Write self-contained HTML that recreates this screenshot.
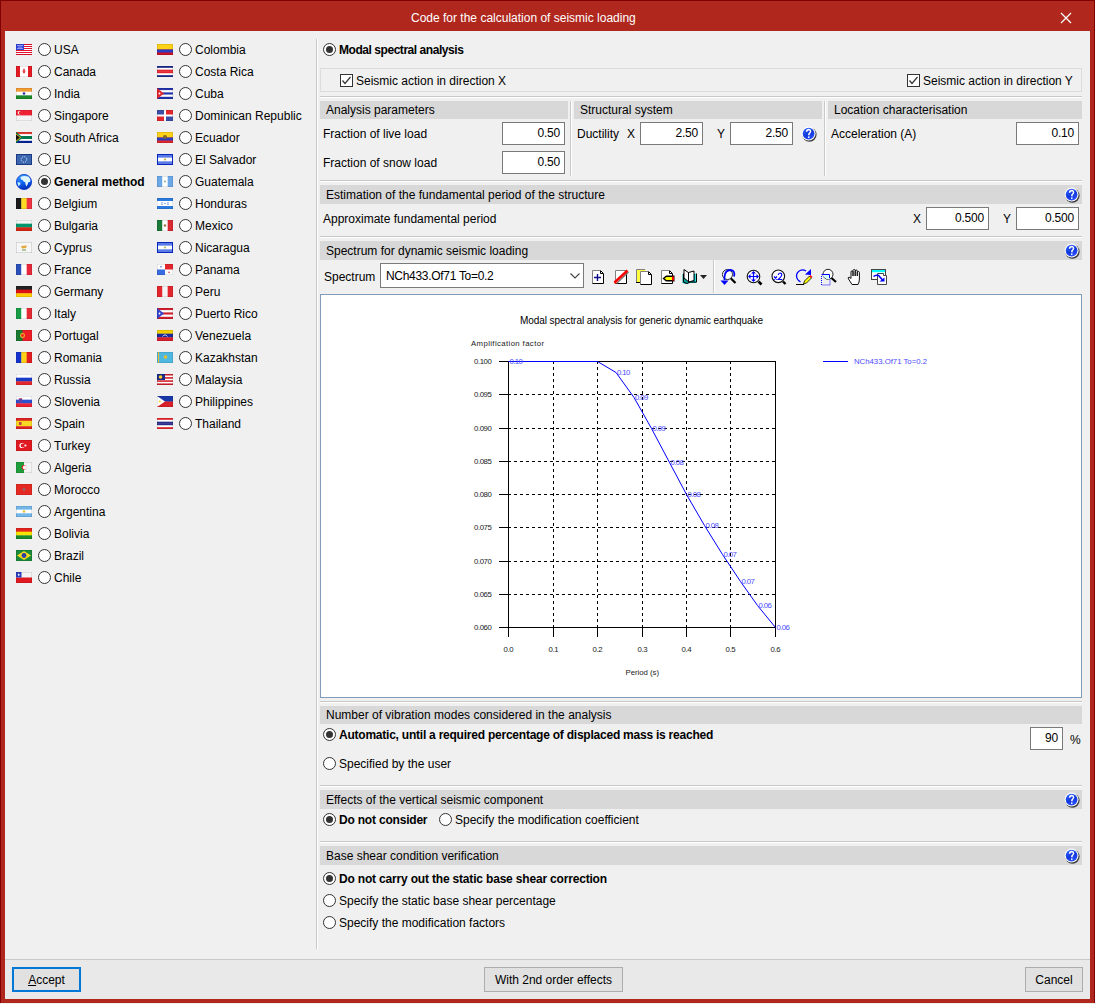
<!DOCTYPE html><html><head><meta charset="utf-8"><style>

*{margin:0;padding:0;box-sizing:border-box}
html,body{width:1095px;height:1004px;overflow:hidden;background:#f0f0f0}
body{position:relative;font-family:"Liberation Sans", sans-serif;font-size:12px;color:#000}
.t{position:absolute;white-space:nowrap;line-height:13px}
.rb{position:absolute;width:13px;height:13px;border:1px solid #333;border-radius:50%;background:#fff}
.rb i{position:absolute;left:2px;top:2px;width:7px;height:7px;border-radius:50%;background:#333}
.cb{position:absolute;width:13px;height:13px;border:1px solid #333;background:#fff}
.cb svg{position:absolute;left:0;top:0}
.in{position:absolute;border:1px solid #7a7a7a;background:#fff;box-sizing:content-box}
.in span{position:absolute;right:4px;top:4px;line-height:13px;letter-spacing:-0.2px}
.hd{position:absolute;height:18px;background:#d8d8d8}
.hp{position:absolute;width:16px;height:16px}
.hs{position:absolute;height:2px;border-top:1px solid #c8c8c8;border-bottom:1px solid #fff}
.vs{position:absolute;width:2px;border-left:1px solid #c8c8c8;border-right:1px solid #fff}
.fl{position:absolute;width:16px;height:11px}
.btn{position:absolute;border:1px solid #adadad;background:#e1e1e1;text-align:center;line-height:23px;padding-top:1px}

</style></head><body>
<svg width="0" height="0" style="position:absolute"><defs><linearGradient id="hg" x1="0" y1="0" x2="0.6" y2="1"><stop offset="0" stop-color="#5fb8ff"/><stop offset="0.18" stop-color="#2a5cff"/><stop offset="0.6" stop-color="#1238d8"/><stop offset="1" stop-color="#2a50ff"/></linearGradient></defs></svg>
<div style="position:absolute;left:0;top:0;width:1095px;height:1003px;background:#b0271e;border:1px solid #7f0000;border-bottom:none"></div>
<div style="position:absolute;left:5px;top:31px;width:1085px;height:968px;background:#f0f0f0"></div>
<div class="t" style="left:411px;top:12px;color:#fff;">Code for the calculation of seismic loading</div>
<svg style="position:absolute;left:1060px;top:12px" width="12" height="12" viewBox="0 0 12 12"><path d="M1 1 L11 11 M11 1 L1 11" stroke="#fff" stroke-width="1.3"/></svg>
<div style="position:absolute;left:5px;top:959px;width:1085px;height:40px;background:#e9e9e9;border-top:1px solid #c8c8c8"></div>
<svg class="fl" style="left:16px;top:44px" width="16" height="11" viewBox="0 0 16 11"><rect x="0" y="0.00" width="16" height="1.30" fill="#e8112d"/><rect x="0" y="1.00" width="16" height="1.30" fill="#ffffff"/><rect x="0" y="2.00" width="16" height="1.30" fill="#e8112d"/><rect x="0" y="3.00" width="16" height="1.30" fill="#ffffff"/><rect x="0" y="4.00" width="16" height="1.30" fill="#e8112d"/><rect x="0" y="5.00" width="16" height="1.30" fill="#ffffff"/><rect x="0" y="6.00" width="16" height="1.30" fill="#e8112d"/><rect x="0" y="7.00" width="16" height="1.30" fill="#ffffff"/><rect x="0" y="8.00" width="16" height="1.30" fill="#e8112d"/><rect x="0" y="9.00" width="16" height="1.30" fill="#ffffff"/><rect x="0" y="10.00" width="16" height="1.30" fill="#e8112d"/><rect x="0" y="0" width="8" height="6" fill="#3344dd"/><g fill="#fff"><circle cx="2" cy="1.5" r=".6"/><circle cx="4" cy="1.5" r=".6"/><circle cx="6" cy="1.5" r=".6"/><circle cx="3" cy="3" r=".6"/><circle cx="5" cy="3" r=".6"/><circle cx="2" cy="4.5" r=".6"/><circle cx="4" cy="4.5" r=".6"/><circle cx="6" cy="4.5" r=".6"/></g><rect x=".25" y=".25" width="15.5" height="10.5" fill="none" stroke="#000" stroke-opacity=".18" stroke-width=".5"/></svg>
<div class="rb" style="left:38px;top:43px"></div>
<div class="t" style="left:54px;top:44px;">USA</div>
<svg class="fl" style="left:16px;top:66px" width="16" height="11" viewBox="0 0 16 11"><rect width="16" height="11" fill="#fff"/><rect x="0" y="0" width="4" height="11" fill="#e31b23"/><rect x="12" y="0" width="4" height="11" fill="#e31b23"/><path d="M8 2 L9.5 5 L8.8 7.5 L8 7 L7.2 7.5 L6.5 5 Z" fill="#e84a50"/><rect x=".25" y=".25" width="15.5" height="10.5" fill="none" stroke="#000" stroke-opacity=".18" stroke-width=".5"/></svg>
<div class="rb" style="left:38px;top:65px"></div>
<div class="t" style="left:54px;top:66px;">Canada</div>
<svg class="fl" style="left:16px;top:88px" width="16" height="11" viewBox="0 0 16 11"><rect x="0" y="0.00" width="16" height="3.97" fill="#f39a32"/><rect x="0" y="3.67" width="16" height="3.97" fill="#ffffff"/><rect x="0" y="7.33" width="16" height="3.97" fill="#1c8a2a"/><circle cx="8" cy="5.5" r="1.3" fill="#2233aa"/><rect x=".25" y=".25" width="15.5" height="10.5" fill="none" stroke="#000" stroke-opacity=".18" stroke-width=".5"/></svg>
<div class="rb" style="left:38px;top:87px"></div>
<div class="t" style="left:54px;top:88px;">India</div>
<svg class="fl" style="left:16px;top:110px" width="16" height="11" viewBox="0 0 16 11"><rect x="0" y="0.00" width="16" height="5.80" fill="#ee2233"/><rect x="0" y="5.50" width="16" height="5.80" fill="#f4f4f4"/><circle cx="3.5" cy="2.8" r="1.8" fill="#fff"/><circle cx="4.3" cy="2.8" r="1.5" fill="#ee2233"/><rect x=".25" y=".25" width="15.5" height="10.5" fill="none" stroke="#000" stroke-opacity=".18" stroke-width=".5"/></svg>
<div class="rb" style="left:38px;top:109px"></div>
<div class="t" style="left:54px;top:110px;">Singapore</div>
<svg class="fl" style="left:16px;top:132px" width="16" height="11" viewBox="0 0 16 11"><rect x="0" y="0.00" width="16" height="2.50" fill="#e03c31"/><rect x="0" y="2.20" width="16" height="2.50" fill="#ffffff"/><rect x="0" y="4.40" width="16" height="2.50" fill="#007a4d"/><rect x="0" y="6.60" width="16" height="2.50" fill="#ffffff"/><rect x="0" y="8.80" width="16" height="2.50" fill="#002395"/><rect x="0" y="4" width="16" height="3" fill="#007a4d"/><path d="M0 0 L7 5.5 L0 11 Z" fill="#007a4d"/><path d="M0 1.5 L5 5.5 L0 9.5 Z" fill="#ffb612"/><path d="M0 2.5 L4 5.5 L0 8.5 Z" fill="#111"/><rect x=".25" y=".25" width="15.5" height="10.5" fill="none" stroke="#000" stroke-opacity=".18" stroke-width=".5"/></svg>
<div class="rb" style="left:38px;top:131px"></div>
<div class="t" style="left:54px;top:132px;">South Africa</div>
<svg class="fl" style="left:16px;top:154px" width="16" height="11" viewBox="0 0 16 11"><rect width="16" height="11" fill="#1f3f8f"/><rect x="1" y="1" width="14" height="9" fill="#3a65b0"/><circle cx="8" cy="5.5" r="2.8" fill="none" stroke="#fff" stroke-width=".9" stroke-dasharray="1 1.2"/><rect x=".25" y=".25" width="15.5" height="10.5" fill="none" stroke="#000" stroke-opacity=".18" stroke-width=".5"/></svg>
<div class="rb" style="left:38px;top:153px"></div>
<div class="t" style="left:54px;top:154px;">EU</div>
<svg style="position:absolute;left:16px;top:174px" width="16" height="16" viewBox="0 0 16 16"><defs><linearGradient id="gl" x1="0.3" y1="0" x2="0.6" y2="1"><stop offset="0" stop-color="#3aa0ff"/><stop offset=".55" stop-color="#1060f0"/><stop offset="1" stop-color="#0028b0"/></linearGradient></defs><circle cx="8" cy="8" r="7.6" fill="url(#gl)" stroke="#0030c8" stroke-width=".8"/><path d="M4.5 3 Q8 1.2 12.5 2.8 L14.2 5 L14.3 7.8 L12.3 8.3 L11.6 10.2 L10.6 12.6 L9.6 10.6 L9.2 8.2 L7.6 7.6 L6.8 6 L5 5.6 Z" fill="#dff6ff"/><path d="M1.3 8.3 L4 8.6 L4.6 10 L2.6 12.2 Z" fill="#c8f0ff"/></svg>
<div class="rb" style="left:38px;top:175px"><i></i></div>
<div class="t" style="left:54px;top:176px;font-weight:bold;letter-spacing:-0.05px;">General method</div>
<svg class="fl" style="left:16px;top:198px" width="16" height="11" viewBox="0 0 16 11"><rect x="0.00" y="0" width="5.63" height="11" fill="#1a1a1a"/><rect x="5.33" y="0" width="5.63" height="11" fill="#fdda24"/><rect x="10.67" y="0" width="5.63" height="11" fill="#ef3340"/><rect x=".25" y=".25" width="15.5" height="10.5" fill="none" stroke="#000" stroke-opacity=".18" stroke-width=".5"/></svg>
<div class="rb" style="left:38px;top:197px"></div>
<div class="t" style="left:54px;top:198px;">Belgium</div>
<svg class="fl" style="left:16px;top:220px" width="16" height="11" viewBox="0 0 16 11"><rect x="0" y="0.00" width="16" height="3.97" fill="#f4f4f4"/><rect x="0" y="3.67" width="16" height="3.97" fill="#00966e"/><rect x="0" y="7.33" width="16" height="3.97" fill="#d62612"/><rect x=".25" y=".25" width="15.5" height="10.5" fill="none" stroke="#000" stroke-opacity=".18" stroke-width=".5"/></svg>
<div class="rb" style="left:38px;top:219px"></div>
<div class="t" style="left:54px;top:220px;">Bulgaria</div>
<svg class="fl" style="left:16px;top:242px" width="16" height="11" viewBox="0 0 16 11"><rect width="16" height="11" fill="#f6f6f6" stroke="#ddd" stroke-width=".5"/><path d="M5 4 L11 3.5 L10 6 L6 6.5 Z" fill="#e3a93a"/><path d="M6 8 L10 8" stroke="#6a9a4a" stroke-width="1"/><rect x=".25" y=".25" width="15.5" height="10.5" fill="none" stroke="#000" stroke-opacity=".18" stroke-width=".5"/></svg>
<div class="rb" style="left:38px;top:241px"></div>
<div class="t" style="left:54px;top:242px;">Cyprus</div>
<svg class="fl" style="left:16px;top:264px" width="16" height="11" viewBox="0 0 16 11"><rect x="0.00" y="0" width="5.63" height="11" fill="#2a4fb8"/><rect x="5.33" y="0" width="5.63" height="11" fill="#ffffff"/><rect x="10.67" y="0" width="5.63" height="11" fill="#e8283a"/><rect x=".25" y=".25" width="15.5" height="10.5" fill="none" stroke="#000" stroke-opacity=".18" stroke-width=".5"/></svg>
<div class="rb" style="left:38px;top:263px"></div>
<div class="t" style="left:54px;top:264px;">France</div>
<svg class="fl" style="left:16px;top:286px" width="16" height="11" viewBox="0 0 16 11"><rect x="0" y="0.00" width="16" height="3.97" fill="#222"/><rect x="0" y="3.67" width="16" height="3.97" fill="#dd1111"/><rect x="0" y="7.33" width="16" height="3.97" fill="#ffce00"/><rect x=".25" y=".25" width="15.5" height="10.5" fill="none" stroke="#000" stroke-opacity=".18" stroke-width=".5"/></svg>
<div class="rb" style="left:38px;top:285px"></div>
<div class="t" style="left:54px;top:286px;">Germany</div>
<svg class="fl" style="left:16px;top:308px" width="16" height="11" viewBox="0 0 16 11"><rect x="0.00" y="0" width="5.63" height="11" fill="#179c45"/><rect x="5.33" y="0" width="5.63" height="11" fill="#ffffff"/><rect x="10.67" y="0" width="5.63" height="11" fill="#e42a35"/><rect x=".25" y=".25" width="15.5" height="10.5" fill="none" stroke="#000" stroke-opacity=".18" stroke-width=".5"/></svg>
<div class="rb" style="left:38px;top:307px"></div>
<div class="t" style="left:54px;top:308px;">Italy</div>
<svg class="fl" style="left:16px;top:330px" width="16" height="11" viewBox="0 0 16 11"><rect width="16" height="11" fill="#ee1c25"/><rect width="6.5" height="11" fill="#1a7a30"/><circle cx="6.5" cy="5.5" r="2.4" fill="#f0c020"/><circle cx="6.5" cy="5.5" r="1.4" fill="#ee1c25"/><rect x=".25" y=".25" width="15.5" height="10.5" fill="none" stroke="#000" stroke-opacity=".18" stroke-width=".5"/></svg>
<div class="rb" style="left:38px;top:329px"></div>
<div class="t" style="left:54px;top:330px;">Portugal</div>
<svg class="fl" style="left:16px;top:352px" width="16" height="11" viewBox="0 0 16 11"><rect x="0.00" y="0" width="5.63" height="11" fill="#1533cc"/><rect x="5.33" y="0" width="5.63" height="11" fill="#fcd116"/><rect x="10.67" y="0" width="5.63" height="11" fill="#e41e20"/><rect x=".25" y=".25" width="15.5" height="10.5" fill="none" stroke="#000" stroke-opacity=".18" stroke-width=".5"/></svg>
<div class="rb" style="left:38px;top:351px"></div>
<div class="t" style="left:54px;top:352px;">Romania</div>
<svg class="fl" style="left:16px;top:374px" width="16" height="11" viewBox="0 0 16 11"><rect x="0" y="0.00" width="16" height="3.97" fill="#ffffff"/><rect x="0" y="3.67" width="16" height="3.97" fill="#1a3cc8"/><rect x="0" y="7.33" width="16" height="3.97" fill="#e3262e"/><rect x=".25" y=".25" width="15.5" height="10.5" fill="none" stroke="#000" stroke-opacity=".18" stroke-width=".5"/></svg>
<div class="rb" style="left:38px;top:373px"></div>
<div class="t" style="left:54px;top:374px;">Russia</div>
<svg class="fl" style="left:16px;top:396px" width="16" height="11" viewBox="0 0 16 11"><rect x="0" y="0.00" width="16" height="3.97" fill="#ffffff"/><rect x="0" y="3.67" width="16" height="3.97" fill="#2a4fd0"/><rect x="0" y="7.33" width="16" height="3.97" fill="#ee2233"/><path d="M3 2.5 L6 2.5 L5.8 5 L4.5 6 L3.2 5 Z" fill="#2a4fd0" stroke="#ee2233" stroke-width=".5"/><rect x=".25" y=".25" width="15.5" height="10.5" fill="none" stroke="#000" stroke-opacity=".18" stroke-width=".5"/></svg>
<div class="rb" style="left:38px;top:395px"></div>
<div class="t" style="left:54px;top:396px;">Slovenia</div>
<svg class="fl" style="left:16px;top:418px" width="16" height="11" viewBox="0 0 16 11"><rect x="0" y="0.00" width="16" height="3.05" fill="#dd2222"/><rect x="0" y="2.75" width="16" height="3.05" fill="#f8d81c"/><rect x="0" y="5.50" width="16" height="3.05" fill="#f8d81c"/><rect x="0" y="8.25" width="16" height="3.05" fill="#dd2222"/><rect x="3" y="4" width="2.5" height="3" fill="#c04040"/><rect x=".25" y=".25" width="15.5" height="10.5" fill="none" stroke="#000" stroke-opacity=".18" stroke-width=".5"/></svg>
<div class="rb" style="left:38px;top:417px"></div>
<div class="t" style="left:54px;top:418px;">Spain</div>
<svg class="fl" style="left:16px;top:440px" width="16" height="11" viewBox="0 0 16 11"><rect width="16" height="11" fill="#e11a22"/><circle cx="6" cy="5.5" r="2.6" fill="#fff"/><circle cx="6.8" cy="5.5" r="2.1" fill="#e11a22"/><circle cx="9.5" cy="5.5" r="1" fill="#fff"/><rect x=".25" y=".25" width="15.5" height="10.5" fill="none" stroke="#000" stroke-opacity=".18" stroke-width=".5"/></svg>
<div class="rb" style="left:38px;top:439px"></div>
<div class="t" style="left:54px;top:440px;">Turkey</div>
<svg class="fl" style="left:16px;top:462px" width="16" height="11" viewBox="0 0 16 11"><rect x="0.00" y="0" width="8.30" height="11" fill="#1f9d3b"/><rect x="8.00" y="0" width="8.30" height="11" fill="#f4f4f4"/><circle cx="8" cy="5.5" r="2.4" fill="#e31b23"/><circle cx="8.7" cy="5.5" r="1.9" fill="#f4f4f4"/><rect x=".25" y=".25" width="15.5" height="10.5" fill="none" stroke="#000" stroke-opacity=".18" stroke-width=".5"/></svg>
<div class="rb" style="left:38px;top:461px"></div>
<div class="t" style="left:54px;top:462px;">Algeria</div>
<svg class="fl" style="left:16px;top:484px" width="16" height="11" viewBox="0 0 16 11"><rect width="16" height="11" fill="#e52822"/><circle cx="8" cy="5.5" r="1.2" fill="#777"/><rect x=".25" y=".25" width="15.5" height="10.5" fill="none" stroke="#000" stroke-opacity=".18" stroke-width=".5"/></svg>
<div class="rb" style="left:38px;top:483px"></div>
<div class="t" style="left:54px;top:484px;">Morocco</div>
<svg class="fl" style="left:16px;top:506px" width="16" height="11" viewBox="0 0 16 11"><rect x="0" y="0.00" width="16" height="3.97" fill="#73b6ea"/><rect x="0" y="3.67" width="16" height="3.97" fill="#ffffff"/><rect x="0" y="7.33" width="16" height="3.97" fill="#73b6ea"/><circle cx="8" cy="5.5" r="1.2" fill="#f0c020"/><rect x=".25" y=".25" width="15.5" height="10.5" fill="none" stroke="#000" stroke-opacity=".18" stroke-width=".5"/></svg>
<div class="rb" style="left:38px;top:505px"></div>
<div class="t" style="left:54px;top:506px;">Argentina</div>
<svg class="fl" style="left:16px;top:528px" width="16" height="11" viewBox="0 0 16 11"><rect x="0" y="0.00" width="16" height="3.97" fill="#e3231c"/><rect x="0" y="3.67" width="16" height="3.97" fill="#f9e300"/><rect x="0" y="7.33" width="16" height="3.97" fill="#1a8a2a"/><rect x=".25" y=".25" width="15.5" height="10.5" fill="none" stroke="#000" stroke-opacity=".18" stroke-width=".5"/></svg>
<div class="rb" style="left:38px;top:527px"></div>
<div class="t" style="left:54px;top:528px;">Bolivia</div>
<svg class="fl" style="left:16px;top:550px" width="16" height="11" viewBox="0 0 16 11"><rect width="16" height="11" fill="#1a8a3a"/><path d="M8 1 L15 5.5 L8 10 L1 5.5 Z" fill="#f8d81c"/><circle cx="8" cy="5.5" r="2.4" fill="#2a3f9f"/><rect x=".25" y=".25" width="15.5" height="10.5" fill="none" stroke="#000" stroke-opacity=".18" stroke-width=".5"/></svg>
<div class="rb" style="left:38px;top:549px"></div>
<div class="t" style="left:54px;top:550px;">Brazil</div>
<svg class="fl" style="left:16px;top:572px" width="16" height="11" viewBox="0 0 16 11"><rect x="0" y="0.00" width="16" height="5.80" fill="#f4f4f4"/><rect x="0" y="5.50" width="16" height="5.80" fill="#e11a22"/><rect width="5.5" height="5.5" fill="#2a3fbf"/><circle cx="2.75" cy="2.75" r=".9" fill="#fff"/><rect x=".25" y=".25" width="15.5" height="10.5" fill="none" stroke="#000" stroke-opacity=".18" stroke-width=".5"/></svg>
<div class="rb" style="left:38px;top:571px"></div>
<div class="t" style="left:54px;top:572px;">Chile</div>
<svg class="fl" style="left:157px;top:44px" width="16" height="11" viewBox="0 0 16 11"><rect width="16" height="11" fill="#ce1126"/><rect width="16" height="5.5" fill="#fcd116"/><rect y="5.5" width="16" height="3" fill="#2a3fbf"/><rect x=".25" y=".25" width="15.5" height="10.5" fill="none" stroke="#000" stroke-opacity=".18" stroke-width=".5"/></svg>
<div class="rb" style="left:179px;top:43px"></div>
<div class="t" style="left:195px;top:44px;">Colombia</div>
<svg class="fl" style="left:157px;top:66px" width="16" height="11" viewBox="0 0 16 11"><rect x="0" y="0.00" width="16" height="2.13" fill="#1a2a8a"/><rect x="0" y="1.83" width="16" height="2.13" fill="#ffffff"/><rect x="0" y="3.67" width="16" height="2.13" fill="#e3262e"/><rect x="0" y="5.50" width="16" height="2.13" fill="#e3262e"/><rect x="0" y="7.33" width="16" height="2.13" fill="#ffffff"/><rect x="0" y="9.17" width="16" height="2.13" fill="#1a2a8a"/><rect x=".25" y=".25" width="15.5" height="10.5" fill="none" stroke="#000" stroke-opacity=".18" stroke-width=".5"/></svg>
<div class="rb" style="left:179px;top:65px"></div>
<div class="t" style="left:195px;top:66px;">Costa Rica</div>
<svg class="fl" style="left:157px;top:88px" width="16" height="11" viewBox="0 0 16 11"><rect x="0" y="0.00" width="16" height="2.50" fill="#2233aa"/><rect x="0" y="2.20" width="16" height="2.50" fill="#ffffff"/><rect x="0" y="4.40" width="16" height="2.50" fill="#2233aa"/><rect x="0" y="6.60" width="16" height="2.50" fill="#ffffff"/><rect x="0" y="8.80" width="16" height="2.50" fill="#2233aa"/><path d="M0 0 L7 5.5 L0 11 Z" fill="#e3262e"/><circle cx="2.5" cy="5.5" r=".9" fill="#fff"/><rect x=".25" y=".25" width="15.5" height="10.5" fill="none" stroke="#000" stroke-opacity=".18" stroke-width=".5"/></svg>
<div class="rb" style="left:179px;top:87px"></div>
<div class="t" style="left:195px;top:88px;">Cuba</div>
<svg class="fl" style="left:157px;top:110px" width="16" height="11" viewBox="0 0 16 11"><rect width="16" height="11" fill="#fff"/><rect x="0" y="0" width="7" height="4.5" fill="#3a4fa8"/><rect x="9" y="0" width="7" height="4.5" fill="#e3262e"/><rect x="0" y="6.5" width="7" height="4.5" fill="#e3262e"/><rect x="9" y="6.5" width="7" height="4.5" fill="#3a4fa8"/><rect x=".25" y=".25" width="15.5" height="10.5" fill="none" stroke="#000" stroke-opacity=".18" stroke-width=".5"/></svg>
<div class="rb" style="left:179px;top:109px"></div>
<div class="t" style="left:195px;top:110px;">Dominican Republic</div>
<svg class="fl" style="left:157px;top:132px" width="16" height="11" viewBox="0 0 16 11"><rect width="16" height="11" fill="#e3262e"/><rect width="16" height="5.5" fill="#fcd116"/><rect y="5.5" width="16" height="3" fill="#2a3fbf"/><circle cx="8" cy="5" r="2" fill="#7a6a30"/><rect x=".25" y=".25" width="15.5" height="10.5" fill="none" stroke="#000" stroke-opacity=".18" stroke-width=".5"/></svg>
<div class="rb" style="left:179px;top:131px"></div>
<div class="t" style="left:195px;top:132px;">Ecuador</div>
<svg class="fl" style="left:157px;top:154px" width="16" height="11" viewBox="0 0 16 11"><rect x="0" y="0.00" width="16" height="3.97" fill="#5a7ae8"/><rect x="0" y="3.67" width="16" height="3.97" fill="#ffffff"/><rect x="0" y="7.33" width="16" height="3.97" fill="#5a7ae8"/><rect x=".5" y=".5" width="15" height="10" fill="none" stroke="#0a2ad0" stroke-width="1"/><circle cx="8" cy="5.5" r="1.1" fill="#c9b040"/><rect x=".25" y=".25" width="15.5" height="10.5" fill="none" stroke="#000" stroke-opacity=".18" stroke-width=".5"/></svg>
<div class="rb" style="left:179px;top:153px"></div>
<div class="t" style="left:195px;top:154px;">El Salvador</div>
<svg class="fl" style="left:157px;top:176px" width="16" height="11" viewBox="0 0 16 11"><rect x="0.00" y="0" width="5.63" height="11" fill="#6aa8e8"/><rect x="5.33" y="0" width="5.63" height="11" fill="#ffffff"/><rect x="10.67" y="0" width="5.63" height="11" fill="#6aa8e8"/><circle cx="8" cy="5.5" r="1.1" fill="#9ab090"/><rect x=".25" y=".25" width="15.5" height="10.5" fill="none" stroke="#000" stroke-opacity=".18" stroke-width=".5"/></svg>
<div class="rb" style="left:179px;top:175px"></div>
<div class="t" style="left:195px;top:176px;">Guatemala</div>
<svg class="fl" style="left:157px;top:198px" width="16" height="11" viewBox="0 0 16 11"><rect width="16" height="11" fill="#fff"/><rect width="16" height="3" fill="#2a7ae0"/><rect y="8" width="16" height="3" fill="#2a7ae0"/><g fill="#2060c0"><rect x="4.5" y="4.3" width="1" height="1"/><rect x="10.5" y="4.3" width="1" height="1"/><rect x="7.5" y="5" width="1" height="1"/><rect x="4.5" y="5.8" width="1" height="1"/><rect x="10.5" y="5.8" width="1" height="1"/></g><rect x=".25" y=".25" width="15.5" height="10.5" fill="none" stroke="#000" stroke-opacity=".18" stroke-width=".5"/></svg>
<div class="rb" style="left:179px;top:197px"></div>
<div class="t" style="left:195px;top:198px;">Honduras</div>
<svg class="fl" style="left:157px;top:220px" width="16" height="11" viewBox="0 0 16 11"><rect x="0.00" y="0" width="5.63" height="11" fill="#1a7a3a"/><rect x="5.33" y="0" width="5.63" height="11" fill="#ffffff"/><rect x="10.67" y="0" width="5.63" height="11" fill="#d82a30"/><circle cx="8" cy="5.5" r="1.3" fill="#9a7a50"/><rect x=".25" y=".25" width="15.5" height="10.5" fill="none" stroke="#000" stroke-opacity=".18" stroke-width=".5"/></svg>
<div class="rb" style="left:179px;top:219px"></div>
<div class="t" style="left:195px;top:220px;">Mexico</div>
<svg class="fl" style="left:157px;top:242px" width="16" height="11" viewBox="0 0 16 11"><rect x="0" y="0.00" width="16" height="3.97" fill="#5a7ae8"/><rect x="0" y="3.67" width="16" height="3.97" fill="#ffffff"/><rect x="0" y="7.33" width="16" height="3.97" fill="#5a7ae8"/><rect x=".5" y=".5" width="15" height="10" fill="none" stroke="#0a2ad0" stroke-width="1"/><circle cx="8" cy="5.5" r="1.1" fill="#b0c060"/><rect x=".25" y=".25" width="15.5" height="10.5" fill="none" stroke="#000" stroke-opacity=".18" stroke-width=".5"/></svg>
<div class="rb" style="left:179px;top:241px"></div>
<div class="t" style="left:195px;top:242px;">Nicaragua</div>
<svg class="fl" style="left:157px;top:264px" width="16" height="11" viewBox="0 0 16 11"><rect width="16" height="11" fill="#fff"/><rect x="8" y="0" width="8" height="5.5" fill="#e3262e"/><rect x="0" y="5.5" width="8" height="5.5" fill="#3a6ae0"/><circle cx="4" cy="2.7" r=".8" fill="#3a6ae0"/><circle cx="12" cy="8.2" r=".8" fill="#e3262e"/><rect x=".25" y=".25" width="15.5" height="10.5" fill="none" stroke="#000" stroke-opacity=".18" stroke-width=".5"/></svg>
<div class="rb" style="left:179px;top:263px"></div>
<div class="t" style="left:195px;top:264px;">Panama</div>
<svg class="fl" style="left:157px;top:286px" width="16" height="11" viewBox="0 0 16 11"><rect x="0.00" y="0" width="5.63" height="11" fill="#e3262e"/><rect x="5.33" y="0" width="5.63" height="11" fill="#f4f4f4"/><rect x="10.67" y="0" width="5.63" height="11" fill="#e3262e"/><rect x=".25" y=".25" width="15.5" height="10.5" fill="none" stroke="#000" stroke-opacity=".18" stroke-width=".5"/></svg>
<div class="rb" style="left:179px;top:285px"></div>
<div class="t" style="left:195px;top:286px;">Peru</div>
<svg class="fl" style="left:157px;top:308px" width="16" height="11" viewBox="0 0 16 11"><rect x="0" y="0.00" width="16" height="2.50" fill="#d02030"/><rect x="0" y="2.20" width="16" height="2.50" fill="#ffffff"/><rect x="0" y="4.40" width="16" height="2.50" fill="#d02030"/><rect x="0" y="6.60" width="16" height="2.50" fill="#ffffff"/><rect x="0" y="8.80" width="16" height="2.50" fill="#d02030"/><path d="M0 0 L7 5.5 L0 11 Z" fill="#3344cc"/><circle cx="2.5" cy="5.5" r=".9" fill="#fff"/><rect x=".25" y=".25" width="15.5" height="10.5" fill="none" stroke="#000" stroke-opacity=".18" stroke-width=".5"/></svg>
<div class="rb" style="left:179px;top:307px"></div>
<div class="t" style="left:195px;top:308px;">Puerto Rico</div>
<svg class="fl" style="left:157px;top:330px" width="16" height="11" viewBox="0 0 16 11"><rect x="0" y="0.00" width="16" height="3.97" fill="#f4d000"/><rect x="0" y="3.67" width="16" height="3.97" fill="#1a2a9a"/><rect x="0" y="7.33" width="16" height="3.97" fill="#d8202a"/><path d="M5.5 6.5 Q8 3.2 10.5 6.5" stroke="#fff" stroke-width=".8" fill="none"/><rect x=".25" y=".25" width="15.5" height="10.5" fill="none" stroke="#000" stroke-opacity=".18" stroke-width=".5"/></svg>
<div class="rb" style="left:179px;top:329px"></div>
<div class="t" style="left:195px;top:330px;">Venezuela</div>
<svg class="fl" style="left:157px;top:352px" width="16" height="11" viewBox="0 0 16 11"><rect width="16" height="11" fill="#4fb8e0"/><rect x="1" y="0" width="1" height="11" fill="#e8c030"/><circle cx="8.5" cy="5" r="1.8" fill="#e8c030"/><rect x=".25" y=".25" width="15.5" height="10.5" fill="none" stroke="#000" stroke-opacity=".18" stroke-width=".5"/></svg>
<div class="rb" style="left:179px;top:351px"></div>
<div class="t" style="left:195px;top:352px;">Kazakhstan</div>
<svg class="fl" style="left:157px;top:374px" width="16" height="11" viewBox="0 0 16 11"><rect x="0" y="0.00" width="16" height="1.87" fill="#d0202a"/><rect x="0" y="1.57" width="16" height="1.87" fill="#fff"/><rect x="0" y="3.14" width="16" height="1.87" fill="#d0202a"/><rect x="0" y="4.71" width="16" height="1.87" fill="#fff"/><rect x="0" y="6.29" width="16" height="1.87" fill="#d0202a"/><rect x="0" y="7.86" width="16" height="1.87" fill="#fff"/><rect x="0" y="9.43" width="16" height="1.87" fill="#d0202a"/><rect width="8" height="6" fill="#1a2a8a"/><circle cx="3.5" cy="3" r="1.8" fill="#f8d020"/><rect x=".25" y=".25" width="15.5" height="10.5" fill="none" stroke="#000" stroke-opacity=".18" stroke-width=".5"/></svg>
<div class="rb" style="left:179px;top:373px"></div>
<div class="t" style="left:195px;top:374px;">Malaysia</div>
<svg class="fl" style="left:157px;top:396px" width="16" height="11" viewBox="0 0 16 11"><rect x="0" y="0.00" width="16" height="5.80" fill="#1a38a8"/><rect x="0" y="5.50" width="16" height="5.80" fill="#d8202a"/><path d="M0 0 L8 5.5 L0 11 Z" fill="#fff"/><circle cx="2.8" cy="5.5" r="1.1" fill="#f8d020"/><rect x=".25" y=".25" width="15.5" height="10.5" fill="none" stroke="#000" stroke-opacity=".18" stroke-width=".5"/></svg>
<div class="rb" style="left:179px;top:395px"></div>
<div class="t" style="left:195px;top:396px;">Philippines</div>
<svg class="fl" style="left:157px;top:418px" width="16" height="11" viewBox="0 0 16 11"><rect x="0" y="0.00" width="16" height="2.13" fill="#e3262e"/><rect x="0" y="1.83" width="16" height="2.13" fill="#ffffff"/><rect x="0" y="3.67" width="16" height="2.13" fill="#2a2d8a"/><rect x="0" y="5.50" width="16" height="2.13" fill="#2a2d8a"/><rect x="0" y="7.33" width="16" height="2.13" fill="#ffffff"/><rect x="0" y="9.17" width="16" height="2.13" fill="#e3262e"/><rect x=".25" y=".25" width="15.5" height="10.5" fill="none" stroke="#000" stroke-opacity=".18" stroke-width=".5"/></svg>
<div class="rb" style="left:179px;top:417px"></div>
<div class="t" style="left:195px;top:418px;">Thailand</div>
<div class="vs" style="left:316px;top:39px;height:910px"></div>
<div class="rb" style="left:323px;top:43px"><i></i></div>
<div class="t" style="left:339px;top:44px;font-weight:bold;letter-spacing:-0.45px;">Modal spectral analysis</div>
<div style="position:absolute;left:320px;top:68px;width:762px;height:24px;border:1px solid #dcdcdc"></div>
<div class="cb" style="left:340px;top:74px"><svg width="11" height="11" viewBox="0 0 11 11"><path d="M1.5 5.5 L4 8.5 L9.5 2" stroke="#333" stroke-width="1.2" fill="none"/></svg></div>
<div class="t" style="left:356px;top:75px;">Seismic action in direction X</div>
<div class="cb" style="left:907px;top:74px"><svg width="11" height="11" viewBox="0 0 11 11"><path d="M1.5 5.5 L4 8.5 L9.5 2" stroke="#333" stroke-width="1.2" fill="none"/></svg></div>
<div class="t" style="left:923px;top:75px;">Seismic action in direction Y</div>
<div class="hs" style="left:320px;top:96px;width:762px"></div>
<div class="hd" style="left:320px;top:101px;width:248px;height:18px"></div>
<div class="t" style="left:326px;top:104px;">Analysis parameters</div>
<div class="hd" style="left:574px;top:101px;width:248px;height:18px"></div>
<div class="t" style="left:580px;top:104px;">Structural system</div>
<div class="hd" style="left:828px;top:101px;width:254px;height:18px"></div>
<div class="t" style="left:834px;top:104px;">Location characterisation</div>
<div class="vs" style="left:570px;top:101px;height:75px"></div>
<div class="vs" style="left:824px;top:101px;height:75px"></div>
<div class="t" style="left:323px;top:128px;">Fraction of live load</div>
<div class="in" style="left:502px;top:122px;width:61px;height:21px"><span>0.50</span></div>
<div class="t" style="left:323px;top:157px;">Fraction of snow load</div>
<div class="in" style="left:502px;top:151px;width:61px;height:21px"><span>0.50</span></div>
<div class="t" style="left:577px;top:128px;">Ductility</div>
<div class="t" style="left:627px;top:128px;">X</div>
<div class="in" style="left:640px;top:122px;width:61px;height:21px"><span>2.50</span></div>
<div class="t" style="left:717px;top:128px;">Y</div>
<div class="in" style="left:730px;top:122px;width:61px;height:21px"><span>2.50</span></div>
<div class="hp" style="left:801px;top:126px"><svg width="17" height="17" viewBox="0 0 17 17"><circle cx="8.4" cy="8.6" r="7.2" fill="#111" opacity="0.8"/><circle cx="7.6" cy="7.6" r="7" fill="#fff"/><circle cx="7.6" cy="7.6" r="5.9" fill="url(#hg)"/><path d="M5.6 5.8 Q5.8 3.6 7.8 3.6 Q9.6 3.7 9.6 5.3 Q9.5 6.6 8.2 7.5 L7.7 9.3" stroke="#fff" stroke-width="1.5" fill="none"/><rect x="7" y="10.4" width="1.5" height="1.5" fill="#fff"/></svg></div>
<div class="t" style="left:831px;top:128px;">Acceleration (A)</div>
<div class="in" style="left:1016px;top:122px;width:61px;height:21px"><span>0.10</span></div>
<div class="hs" style="left:320px;top:180px;width:762px"></div>
<div class="hd" style="left:320px;top:185px;width:762px;height:19px"></div>
<div class="t" style="left:326px;top:189px;">Estimation of the fundamental period of the structure</div>
<div class="hp" style="left:1064px;top:187px"><svg width="17" height="17" viewBox="0 0 17 17"><circle cx="8.4" cy="8.6" r="7.2" fill="#111" opacity="0.8"/><circle cx="7.6" cy="7.6" r="7" fill="#fff"/><circle cx="7.6" cy="7.6" r="5.9" fill="url(#hg)"/><path d="M5.6 5.8 Q5.8 3.6 7.8 3.6 Q9.6 3.7 9.6 5.3 Q9.5 6.6 8.2 7.5 L7.7 9.3" stroke="#fff" stroke-width="1.5" fill="none"/><rect x="7" y="10.4" width="1.5" height="1.5" fill="#fff"/></svg></div>
<div class="t" style="left:323px;top:213px;">Approximate fundamental period</div>
<div class="t" style="left:913px;top:213px;">X</div>
<div class="in" style="left:926px;top:207px;width:61px;height:21px"><span>0.500</span></div>
<div class="t" style="left:1003px;top:213px;">Y</div>
<div class="in" style="left:1016px;top:207px;width:61px;height:21px"><span>0.500</span></div>
<div class="hs" style="left:320px;top:236px;width:762px"></div>
<div class="hd" style="left:320px;top:241px;width:762px;height:19px"></div>
<div class="t" style="left:326px;top:245px;">Spectrum for dynamic seismic loading</div>
<div class="hp" style="left:1064px;top:243px"><svg width="17" height="17" viewBox="0 0 17 17"><circle cx="8.4" cy="8.6" r="7.2" fill="#111" opacity="0.8"/><circle cx="7.6" cy="7.6" r="7" fill="#fff"/><circle cx="7.6" cy="7.6" r="5.9" fill="url(#hg)"/><path d="M5.6 5.8 Q5.8 3.6 7.8 3.6 Q9.6 3.7 9.6 5.3 Q9.5 6.6 8.2 7.5 L7.7 9.3" stroke="#fff" stroke-width="1.5" fill="none"/><rect x="7" y="10.4" width="1.5" height="1.5" fill="#fff"/></svg></div>
<div class="t" style="left:324px;top:271px;">Spectrum</div>
<div class="in" style="left:380px;top:263px;width:202px;height:23px"></div>
<div class="t" style="left:386px;top:270px;letter-spacing:-0.3px;">NCh433.Of71 To=0.2</div>
<svg style="position:absolute;left:569px;top:272px" width="12" height="8" viewBox="0 0 12 8"><path d="M1.5 1.5 L6 6 L10.5 1.5" stroke="#444" stroke-width="1.1" fill="none"/></svg>
<div class="vs" style="left:713px;top:260px;height:33px"></div>
<svg style="position:absolute;left:0;top:0" width="1095" height="1004"><path d="M592.5 283.5 V270.5 H600.5 L603.5 273.5 V283.5 Z" fill="#fff"/><path d="M592.5 283.5 V270.5 H600.5" fill="none" stroke="#808080" stroke-width="1"/><path d="M600.5 270.5 L603.5 273.5 V283.5 H592.5" fill="none" stroke="#000" stroke-width="1"/><path d="M600.5 271 V273.5 H603" fill="none" stroke="#000" stroke-width="1"/><path d="M594 277.5 H601 M597.5 274 V281" stroke="#0a0a8a" stroke-width="1.4"/><path d="M615.5 283.5 V270.5 H626.5 L626.5 270.5 V283.5 Z" fill="#fff"/><path d="M615.5 283.5 V270.5 H626.5" fill="none" stroke="#808080" stroke-width="1"/><path d="M626.5 270.5 L626.5 270.5 V283.5 H615.5" fill="none" stroke="#000" stroke-width="1"/><path d="M626.5 271 V270.5 H626" fill="none" stroke="#000" stroke-width="1"/><path d="M615.5 282.5 L627.5 271" stroke="#777" stroke-width="1.2" transform="translate(1,1)"/><path d="M614.5 282.5 L627.5 270.5" stroke="#ff0000" stroke-width="2.4"/><path d="M614.5 280.5 L614.5 283.5 L617 283.5 Z" fill="#ff0000"/><path d="M636.5 282.5 V269.5 H645.5 V282.5 Z" fill="#ffff40"/><path d="M636.5 282.5 V269.5 H645" fill="none" stroke="#808080" stroke-width="1"/><path d="M636 282.5 H640" stroke="#000" stroke-width="1"/><path d="M640.5 284.5 V271.5 H648.5 L651.5 274.5 V284.5 Z" fill="#fff"/><path d="M640.5 284.5 V271.5 H648.5" fill="none" stroke="#808080" stroke-width="1"/><path d="M648.5 271.5 L651.5 274.5 V284.5 H640.5" fill="none" stroke="#000" stroke-width="1"/><path d="M648.5 272 V274.5 H651" fill="none" stroke="#000" stroke-width="1"/><path d="M661.5 283.5 V270.5 H669.5 L672.5 273.5 V283.5 Z" fill="#fff"/><path d="M661.5 283.5 V270.5 H669.5" fill="none" stroke="#808080" stroke-width="1"/><path d="M669.5 270.5 L672.5 273.5 V283.5 H661.5" fill="none" stroke="#000" stroke-width="1"/><path d="M669.5 271 V273.5 H672" fill="none" stroke="#000" stroke-width="1"/><path d="M662.5 278.5 L666 275.5 H674.5 V281.5 H666 Z" fill="#000"/><path d="M664.5 278.5 L666.5 277 H672 V280 H666.5 Z" fill="#ffff00"/><rect x="672" y="276.5" width="2" height="4" fill="#ff0000"/><path d="M682.5 274 V283 L686 284 L690 283 H696.5 V274 Z" fill="#00a0a0"/><path d="M683.5 273.5 V282 L687 283.5 L690 282 H696.5 V273.5" fill="none" stroke="#000" stroke-width="1"/><path d="M684 269.5 L689 273 V282 L684 278 Z" fill="#fff" stroke="#000" stroke-width="1"/><path d="M688.5 272.5 L694 271 V280.5 L688.5 282 Z" fill="#fff" stroke="#000" stroke-width="1"/><path d="M695.5 273.5 V281.5" stroke="#30e0e0" stroke-width="1"/><path d="M700 275 H707 L703.5 279 Z" fill="#222"/><circle cx="727.5" cy="274.5" r="5" fill="#fff" stroke="#222" stroke-width="1"/><path d="M731 278.5 L735.5 283" stroke="#000" stroke-width="2.2"/><path d="M734 276.5 Q735.5 270.5 730.5 270 Q725 270 724.5 277 V280" fill="none" stroke="#0000ff" stroke-width="1.8"/><path d="M720.5 280.5 H728.5 L724.5 285 Z" fill="#0000ff"/><circle cx="753.5" cy="276.5" r="6.3" fill="#fff" stroke="#111" stroke-width="1.1"/><path d="M758.5 281.5 L761.5 284.5" stroke="#000" stroke-width="2.6"/><path d="M753.5 271 L751 273.5 H756 Z M753.5 282 L751 279.5 H756 Z M748 276.5 L750.5 274 V279 Z M759 276.5 L756.5 274 V279 Z" fill="#0000ff"/><path d="M753.5 273 V280 M750 276.5 H757" stroke="#0000ff" stroke-width="1.2"/><circle cx="778.3" cy="276.3" r="6.3" fill="#fff" stroke="#111" stroke-width="1.1"/><path d="M783 281.5 L785.5 284" stroke="#000" stroke-width="2.4"/><path d="M774 276.5 L777 279.5 M777 276.5 L774 279.5" stroke="#0000ff" stroke-width="1.2"/><path d="M778.3 275 Q778.5 273 780.3 273 Q782 273.2 781.8 275 Q781.5 276.5 778.3 279.5 H782.2" fill="none" stroke="#0000ff" stroke-width="1.2"/><path d="M806 271 Q803 269 800 270.5 Q796.5 272.5 796.5 276 Q796.8 280 800.5 281.8" fill="none" stroke="#0000ff" stroke-width="1.3"/><path d="M805 274.5 L811 269 V275 Z" fill="#0000ff"/><path d="M796 284.5 H804" stroke="#000" stroke-width="1"/><path d="M803.5 284 L804.5 281 L809.5 276 L811.5 278 L806.5 283 Z" fill="#ffff00" stroke="#000" stroke-width=".8"/><path d="M809.5 276 L810.5 275 L812.5 277 L811.5 278 Z" fill="#ff0000"/><circle cx="828" cy="274.3" r="5" fill="#fff" stroke="#222" stroke-width="1"/><path d="M823 274.5 H829.5 V279.5 Q826 279.5 823 276 Z" fill="#d8ffff"/><path d="M831.5 278 L836 282" stroke="#000" stroke-width="2.2"/><path d="M821.5 274.5 H829.5 V278" fill="none" stroke="#0000ff" stroke-width="1"/><path d="M821.5 276 V285 H830 V279" fill="none" stroke="#0000ff" stroke-width="1" stroke-dasharray="1 1"/><path d="M852 284.5 L848.5 279 Q847.5 277.5 849 277 L851 278.5 V272 Q851 270.8 852 270.8 Q853 270.8 853 272 V276 V270.5 Q853.2 269.5 854.2 269.5 Q855.2 269.5 855.2 270.5 V276 V271 Q855.4 270 856.3 270 Q857.3 270 857.3 271 V276 V272.5 Q857.5 271.5 858.4 271.5 Q859.4 271.5 859.4 272.5 V279 Q859.4 282 858 284.5 Z" fill="#fff" stroke="#111" stroke-width="1"/><rect x="871.5" y="269.5" width="14" height="10" fill="#fff" stroke="#444" stroke-width="1"/><rect x="872" y="270" width="13" height="2.2" fill="#00ffff"/><path d="M877.5 284.5 V273.5 H883.5 V275.5 H886.5 V284.5 Z" fill="#fff" stroke="#444" stroke-width="1"/><path d="M873.5 276.5 Q876 274.5 878.5 275.5 L883 280.5" fill="none" stroke="#0000ff" stroke-width="1.5"/><path d="M879.5 281.5 H884.5 V277.5 Z" fill="#0000ff"/></svg>
<div style="position:absolute;left:320px;top:294px;width:762px;height:404px;border:1px solid #7f9db9;background:#fff"></div>
<svg style="position:absolute;left:0;top:0" width="1095" height="1004"><style>.ct{font-family:"Liberation Sans";font-size:7.8px;fill:#222}.cl{font-family:"Liberation Sans";font-size:7.8px;fill:#4a4aff}</style><path d="M553.5 361 V627" stroke="#000" stroke-width="1" stroke-dasharray="3 3"/><path d="M597.5 361 V627" stroke="#000" stroke-width="1" stroke-dasharray="3 3"/><path d="M642.5 361 V627" stroke="#000" stroke-width="1" stroke-dasharray="3 3"/><path d="M686.5 361 V627" stroke="#000" stroke-width="1" stroke-dasharray="3 3"/><path d="M730.5 361 V627" stroke="#000" stroke-width="1" stroke-dasharray="3 3"/><path d="M508 394.5 H775" stroke="#000" stroke-width="1" stroke-dasharray="3 3"/><path d="M508 428.5 H775" stroke="#000" stroke-width="1" stroke-dasharray="3 3"/><path d="M508 461.5 H775" stroke="#000" stroke-width="1" stroke-dasharray="3 3"/><path d="M508 494.5 H775" stroke="#000" stroke-width="1" stroke-dasharray="3 3"/><path d="M508 527.5 H775" stroke="#000" stroke-width="1" stroke-dasharray="3 3"/><path d="M508 561.5 H775" stroke="#000" stroke-width="1" stroke-dasharray="3 3"/><path d="M508 594.5 H775" stroke="#000" stroke-width="1" stroke-dasharray="3 3"/><rect x="508.5" y="361.5" width="267" height="266" fill="none" stroke="#000" stroke-width="1"/><path d="M499 361.5 H508" stroke="#000" stroke-width="1"/><path d="M499 394.5 H508" stroke="#000" stroke-width="1"/><path d="M499 428.5 H508" stroke="#000" stroke-width="1"/><path d="M499 461.5 H508" stroke="#000" stroke-width="1"/><path d="M499 494.5 H508" stroke="#000" stroke-width="1"/><path d="M499 527.5 H508" stroke="#000" stroke-width="1"/><path d="M499 561.5 H508" stroke="#000" stroke-width="1"/><path d="M499 594.5 H508" stroke="#000" stroke-width="1"/><path d="M499 627.5 H508" stroke="#000" stroke-width="1"/><path d="M508.5 627 V637" stroke="#000" stroke-width="1"/><path d="M553.5 627 V637" stroke="#000" stroke-width="1"/><path d="M597.5 627 V637" stroke="#000" stroke-width="1"/><path d="M642.5 627 V637" stroke="#000" stroke-width="1"/><path d="M686.5 627 V637" stroke="#000" stroke-width="1"/><path d="M730.5 627 V637" stroke="#000" stroke-width="1"/><path d="M775.5 627 V637" stroke="#000" stroke-width="1"/><text x="474" y="364" class="ct" textLength="17.8">0.100</text><text x="474" y="397" class="ct" textLength="17.8">0.095</text><text x="474" y="431" class="ct" textLength="17.8">0.090</text><text x="474" y="464" class="ct" textLength="17.8">0.085</text><text x="474" y="497" class="ct" textLength="17.8">0.080</text><text x="474" y="530" class="ct" textLength="17.8">0.075</text><text x="474" y="564" class="ct" textLength="17.8">0.070</text><text x="474" y="597" class="ct" textLength="17.8">0.065</text><text x="474" y="630" class="ct" textLength="17.8">0.060</text><text x="503.4" y="652" class="ct" textLength="10.2">0.0</text><text x="548.4" y="652" class="ct" textLength="10.2">0.1</text><text x="592.4" y="652" class="ct" textLength="10.2">0.2</text><text x="637.4" y="652" class="ct" textLength="10.2">0.3</text><text x="681.4" y="652" class="ct" textLength="10.2">0.4</text><text x="725.4" y="652" class="ct" textLength="10.2">0.5</text><text x="770.4" y="652" class="ct" textLength="10.2">0.6</text><text x="520" y="323.5" style="font-size:10px" textLength="243">Modal spectral analysis for generic dynamic earthquake</text><text x="471" y="346" class="ct" textLength="73">Amplification factor</text><text x="625.5" y="675" class="ct" textLength="33.5">Period (s)</text><polyline points="508.5,361.5 597.5,361.5 616,372.5 634,397.5 651.5,428.5 669.5,462.5 686.5,494.5 704.5,525.5 722.5,554.5 740.5,581.5 757.5,605.5 775.5,627.5" fill="none" stroke="#0000ff" stroke-width="1"/><text x="509.5" y="363.8" class="cl" textLength="13.3">0.10</text><text x="617" y="374.8" class="cl" textLength="13.3">0.10</text><text x="635" y="399.8" class="cl" textLength="13.3">0.09</text><text x="652.5" y="430.8" class="cl" textLength="13.3">0.09</text><text x="670.5" y="464.8" class="cl" textLength="13.3">0.08</text><text x="687.5" y="496.8" class="cl" textLength="13.3">0.08</text><text x="705.5" y="527.8" class="cl" textLength="13.3">0.08</text><text x="723.5" y="556.8" class="cl" textLength="13.3">0.07</text><text x="741.5" y="583.8" class="cl" textLength="13.3">0.07</text><text x="758.5" y="607.8" class="cl" textLength="13.3">0.06</text><text x="776.5" y="629.8" class="cl" textLength="13.3">0.06</text><path d="M823 361.5 H848" stroke="#0000ff" stroke-width="1"/><text x="854" y="364" class="cl" textLength="73">NCh433.Of71 To=0.2</text></svg>
<div class="hs" style="left:320px;top:701px;width:762px"></div>
<div class="hd" style="left:320px;top:706px;width:762px;height:18px"></div>
<div class="t" style="left:326px;top:709px;">Number of vibration modes considered in the analysis</div>
<div class="rb" style="left:323px;top:728px"><i></i></div>
<div class="t" style="left:339px;top:729px;font-weight:bold;letter-spacing:-0.23px;">Automatic, until a required percentage of displaced mass is reached</div>
<div class="in" style="left:1030px;top:727px;width:31px;height:21px"><span>90</span></div>
<div class="t" style="left:1070px;top:734px;">%</div>
<div class="rb" style="left:323px;top:757px"></div>
<div class="t" style="left:339px;top:758px;">Specified by the user</div>
<div class="hs" style="left:320px;top:785px;width:762px"></div>
<div class="hd" style="left:320px;top:790px;width:762px;height:19px"></div>
<div class="t" style="left:326px;top:794px;">Effects of the vertical seismic component</div>
<div class="hp" style="left:1064px;top:792px"><svg width="17" height="17" viewBox="0 0 17 17"><circle cx="8.4" cy="8.6" r="7.2" fill="#111" opacity="0.8"/><circle cx="7.6" cy="7.6" r="7" fill="#fff"/><circle cx="7.6" cy="7.6" r="5.9" fill="url(#hg)"/><path d="M5.6 5.8 Q5.8 3.6 7.8 3.6 Q9.6 3.7 9.6 5.3 Q9.5 6.6 8.2 7.5 L7.7 9.3" stroke="#fff" stroke-width="1.5" fill="none"/><rect x="7" y="10.4" width="1.5" height="1.5" fill="#fff"/></svg></div>
<div class="rb" style="left:323px;top:813px"><i></i></div>
<div class="t" style="left:339px;top:814px;font-weight:bold;letter-spacing:-0.2px;">Do not consider</div>
<div class="rb" style="left:439px;top:813px"></div>
<div class="t" style="left:455px;top:814px;">Specify the modification coefficient</div>
<div class="hs" style="left:320px;top:841px;width:762px"></div>
<div class="hd" style="left:320px;top:846px;width:762px;height:19px"></div>
<div class="t" style="left:326px;top:850px;">Base shear condition verification</div>
<div class="hp" style="left:1064px;top:848px"><svg width="17" height="17" viewBox="0 0 17 17"><circle cx="8.4" cy="8.6" r="7.2" fill="#111" opacity="0.8"/><circle cx="7.6" cy="7.6" r="7" fill="#fff"/><circle cx="7.6" cy="7.6" r="5.9" fill="url(#hg)"/><path d="M5.6 5.8 Q5.8 3.6 7.8 3.6 Q9.6 3.7 9.6 5.3 Q9.5 6.6 8.2 7.5 L7.7 9.3" stroke="#fff" stroke-width="1.5" fill="none"/><rect x="7" y="10.4" width="1.5" height="1.5" fill="#fff"/></svg></div>
<div class="rb" style="left:323px;top:872px"><i></i></div>
<div class="t" style="left:339px;top:873px;font-weight:bold;letter-spacing:-0.18px;">Do not carry out the static base shear correction</div>
<div class="rb" style="left:323px;top:894px"></div>
<div class="t" style="left:339px;top:895px;">Specify the static base shear percentage</div>
<div class="rb" style="left:323px;top:916px"></div>
<div class="t" style="left:339px;top:917px;">Specify the modification factors</div>
<div class="btn" style="left:12px;top:967px;width:69px;height:25px;border:2px solid #0078d7;line-height:21px"><u>A</u>ccept</div>
<div class="btn" style="left:484px;top:967px;width:139px;height:25px">With 2nd order effects</div>
<div class="btn" style="left:1025px;top:967px;width:58px;height:25px">Cancel</div>
</body></html>
